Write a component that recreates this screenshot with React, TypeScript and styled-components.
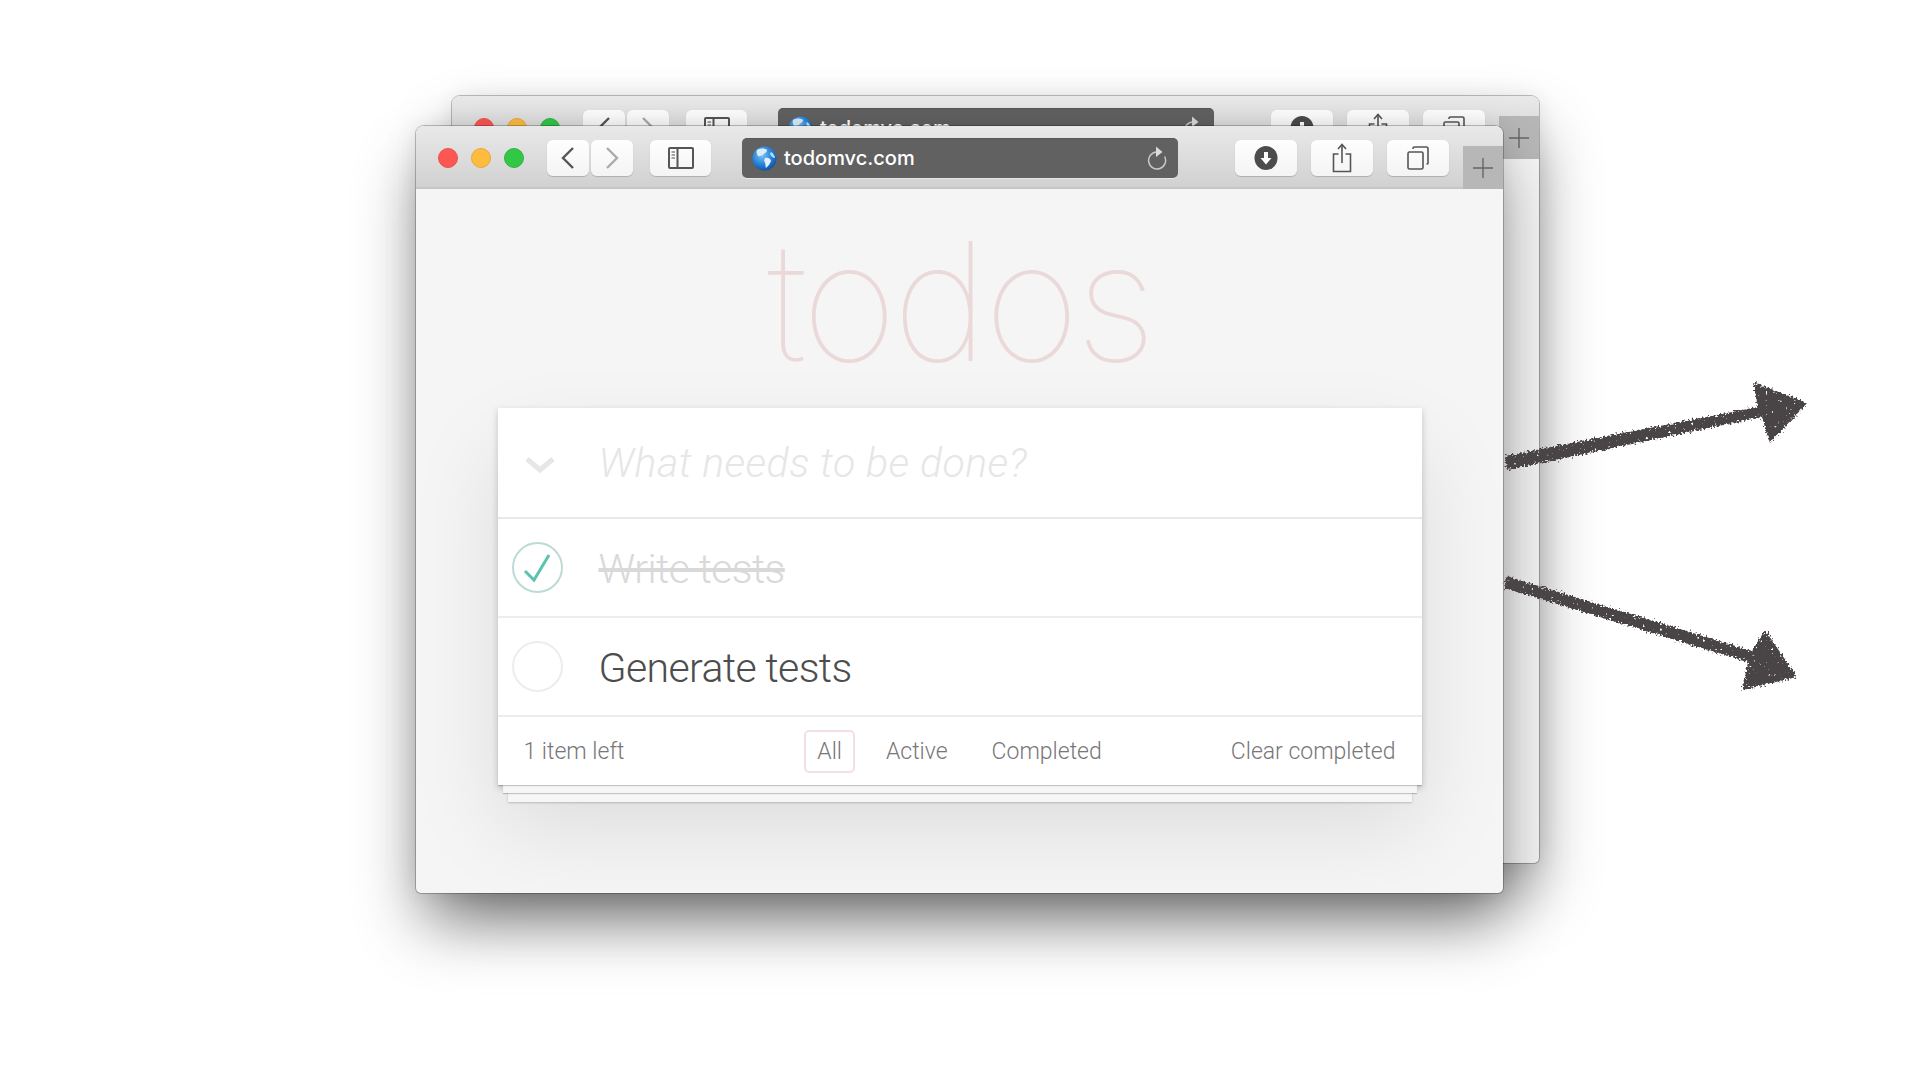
import styled, { createGlobalStyle } from "styled-components";

const GlobalStyle = createGlobalStyle`
    html, body {
        margin: 0;
        background: #fff;
        font-family: Inter, "Liberation Sans", sans-serif;
    }
`

export default function App() {
    return (
        <Stage>
            <GlobalStyle />
            <BrowserWindow $left={452} $top={96}>
                <Toolbar />
            </BrowserWindow>
            <BrowserWindow $left={416} $top={126}>
                <Toolbar />
                <Content>
                    <Title>todos</Title>
                    <TodoApp />
                </Content>
            </BrowserWindow>
            <ChalkArrows />
        </Stage>
    )
}

function Toolbar() {
    return (
        <Bar>
            <Lights>
                <Light $color="#fc5753" $edge="#ec4f4b" />
                <Light $color="#fdbc40" $edge="#e8a838" />
                <Light $color="#33c748" $edge="#2bb53e" />
            </Lights>
            <NavGroup>
                <ToolButton $width={42}>
                    <svg width="14" height="22" viewBox="0 0 14 22" fill="none" stroke="#555" strokeWidth="2.4">
                        <path d="M12 1 L2 11 L12 21" />
                    </svg>
                </ToolButton>
                <ToolButton $width={42}>
                    <svg width="14" height="22" viewBox="0 0 14 22" fill="none" stroke="#aaa" strokeWidth="2.4">
                        <path d="M2 1 L12 11 L2 21" />
                    </svg>
                </ToolButton>
            </NavGroup>
            <ToolButton $width={61}>
                <svg width="26" height="22" viewBox="0 0 26 22" fill="none" stroke="#555" strokeWidth="2">
                    <rect x="1" y="1" width="24" height="20" rx="1" />
                    <path d="M9.5 1 V21" />
                    <path d="M3.5 5 H7 M3.5 8 H7 M3.5 11 H7" stroke="#888" strokeWidth="1.5" />
                </svg>
            </ToolButton>
            <UrlBar>
                <Globe />
                <UrlText>todomvc.com</UrlText>
                <Reload>
                    <svg width="20" height="26" viewBox="0 0 20 26" fill="none">
                        <path d="M10 7 A8.5 8.5 0 1 0 17.6 11.5" stroke="#c8c8c8" strokeWidth="1.5" />
                        <path d="M9 1.5 L15.5 7 L9 12 Z" fill="#dadada" />
                    </svg>
                </Reload>
            </UrlBar>
            <ActionGroup>
                <ToolButton $width={62}>
                    <svg width="24" height="24" viewBox="0 0 24 24">
                        <ellipse cx="12" cy="12" rx="11.5" ry="12" fill="#4c4c4c" />
                        <path d="M10 6 H14 V12 H17.5 L12 18.5 L6.5 12 H10 Z" fill="#fff" />
                    </svg>
                </ToolButton>
                <ToolButton $width={62}>
                    <svg width="20" height="30" viewBox="0 0 20 30" fill="none" stroke="#555" strokeWidth="1.6">
                        <path d="M6.5 11 H1.5 V28.5 H18.5 V11 H13.5" />
                        <path d="M10 20 V2" />
                        <path d="M6 6 L10 1.5 L14 6" />
                    </svg>
                </ToolButton>
                <ToolButton $width={62}>
                    <svg width="22" height="24" viewBox="0 0 22 24" fill="none" stroke="#555" strokeWidth="1.6">
                        <rect x="1" y="6" width="15" height="17" rx="1.5" />
                        <path d="M6 3 V2.5 A1.5 1.5 0 0 1 7.5 1 H19.5 A1.5 1.5 0 0 1 21 2.5 V16 A1.5 1.5 0 0 1 19.5 18" />
                    </svg>
                </ToolButton>
            </ActionGroup>
            <NewTab>
                <svg width="20" height="20" viewBox="0 0 20 20" stroke="#666" strokeWidth="1.4">
                    <path d="M10 0 V20 M0 10 H20" />
                </svg>
            </NewTab>
        </Bar>
    )
}

function Globe() {
    return (
        <svg width="25" height="25" viewBox="0 0 25 25">
            <defs>
                <radialGradient id="ocean" cx="40%" cy="35%" r="70%">
                    <stop offset="0%" stopColor="#7cc4f5" />
                    <stop offset="55%" stopColor="#2a86dc" />
                    <stop offset="100%" stopColor="#0b4f9e" />
                </radialGradient>
            </defs>
            <circle cx="12.5" cy="12.5" r="12" fill="url(#ocean)" />
            <path d="M5 4 C8 2 13 2 15 4 C15 7 12 7 11 9 C9 9 8 11 6 10 C5 8 4 6 5 4 Z" fill="#dcecf8" />
            <path d="M13 12 C16 11 19 13 19 15 C18 18 16 20 14 22 C13 19 14 17 12 15 Z" fill="#e4f1fa" />
            <path d="M19 6 C21 7 23 10 23 12 C21 12 19 10 18 8 Z" fill="#b9dcf4" />
        </svg>
    )
}

function TodoApp() {
    return (
        <Card>
            <InputRow>
                <ToggleAll>
                    <svg width="30" height="18" viewBox="0 0 30 18" fill="none" stroke="#e6e6e6" strokeWidth="5">
                        <path d="M2 3 L15 14 L28 3" />
                    </svg>
                </ToggleAll>
                <Placeholder>What needs to be done?</Placeholder>
            </InputRow>
            <TodoRow>
                <CheckCircle $done>
                    <svg width="28" height="30" viewBox="0 0 28 30" fill="none" stroke="#5dc2af" strokeWidth="3">
                        <path d="M2 18 L11 27 L26 2" />
                    </svg>
                </CheckCircle>
                <TodoText $done>Write tests</TodoText>
            </TodoRow>
            <TodoRow>
                <CheckCircle />
                <TodoText>Generate tests</TodoText>
            </TodoRow>
            <Footer>
                <FooterLeft>1 item left</FooterLeft>
                <Filters>
                    <Filter $active>All</Filter>
                    <Filter>Active</Filter>
                    <Filter>Completed</Filter>
                </Filters>
                <FooterRight>Clear completed</FooterRight>
            </Footer>
        </Card>
    )
}

function ChalkArrows() {
    return (
        <ArrowLayer viewBox="0 0 1920 1080">
            <defs>
                <filter id="chalk" filterUnits="userSpaceOnUse" x="1480" y="360" width="340" height="350">
                    <feTurbulence type="fractalNoise" baseFrequency="0.5" numOctaves="3" seed="4" result="noise" />
                    <feDisplacementMap in="SourceGraphic" in2="noise" scale="8" xChannelSelector="R" yChannelSelector="G" result="rough" />
                    <feTurbulence type="fractalNoise" baseFrequency="0.35" numOctaves="1" seed="9" />
                    <feColorMatrix values="0 0 0 0 0  0 0 0 0 0  0 0 0 0 0  0 0 0 -14 4.4" result="holes" />
                    <feComposite in="rough" in2="holes" operator="out" />
                </filter>
            </defs>
            <g filter="url(#chalk)" fill="#4a4546">
                <path d="M1505 456 L1758 407 L1753 382 L1807 403 L1770 443 L1762 417 L1507 470 Z" />
                <path d="M1506 576 L1752 651 L1765 630 L1797 677 L1742 690 L1748 662 L1504 588 Z" />
            </g>
        </ArrowLayer>
    )
}

const Stage = styled.div`
    position: relative;
    width: 1920px;
    height: 1080px;
    overflow: hidden;
    background: #fff;
`

const BrowserWindow = styled.div<{ $left: number; $top: number }>`
    position: absolute;
    left: ${p => p.$left}px;
    top: ${p => p.$top}px;
    width: 1087px;
    height: 767px;
    display: flex;
    flex-direction: column;
    border-radius: 8px 8px 5px 5px;
    background: #f5f5f5;
    box-shadow: 0 34px 64px -4px rgba(0, 0, 0, .42), 0 0 22px rgba(0, 0, 0, .08), 0 0 0 1px rgba(0, 0, 0, .24);
    overflow: hidden;
`

const Bar = styled.div`
    flex: none;
    height: 63px;
    box-sizing: border-box;
    display: flex;
    align-items: center;
    padding: 2px 0 0 22px;
    background: linear-gradient(#e9e9e9, #d1d1d1);
    border-bottom: 2px solid #c6c6c6;
    position: relative;
`

const Lights = styled.div`
    display: flex;
    gap: 13px;
`

const Light = styled.span<{ $color: string; $edge: string }>`
    width: 20px;
    height: 20px;
    box-sizing: border-box;
    border-radius: 50%;
    background: ${p => p.$color};
    border: 1px solid ${p => p.$edge};
`

const NavGroup = styled.div`
    display: flex;
    gap: 2px;
    margin: 0 17px 0 23px;
`

const ToolButton = styled.div<{ $width: number }>`
    width: ${p => p.$width}px;
    height: 36px;
    display: flex;
    align-items: center;
    justify-content: center;
    border-radius: 6px;
    background: linear-gradient(#fefefe, #f4f4f4);
    box-shadow: 0 1px 1px rgba(0, 0, 0, .18);
`

const UrlBar = styled.div`
    width: 436px;
    height: 40px;
    box-sizing: border-box;
    margin-left: 31px;
    padding: 0 11px 0 10px;
    display: flex;
    align-items: center;
    border-radius: 5px;
    background: #616161;
    border-top: 1px solid #565656;
    box-shadow: 0 1px 0 rgba(255, 255, 255, .4);
`

const UrlText = styled.span`
    margin-left: 7px;
    font-size: 20px;
    font-weight: 500;
    color: #fff;
`

const Reload = styled.span`
    margin-left: auto;
    display: flex;
`

const ActionGroup = styled.div`
    display: flex;
    gap: 14px;
    margin-left: 57px;
`

const NewTab = styled.div`
    position: absolute;
    right: 0;
    bottom: -2px;
    width: 40px;
    height: 43px;
    display: flex;
    align-items: center;
    justify-content: center;
    background: #b7b7b7;
`

const Content = styled.div`
    flex: 1;
    display: flex;
    flex-direction: column;
    align-items: center;
`

const Title = styled.h1`
    margin: 0;
    height: 219px;
    line-height: 224px;
    font-size: 165px;
    font-weight: 100;
    color: #ebd9da;
    letter-spacing: -4.5px;
`

const Card = styled.div`
    width: 924px;
    background: #fff;
    font-family: Roboto, Inter, sans-serif;
    box-shadow: 0 3px 7px rgba(0, 0, 0, .2), 0 42px 84px rgba(0, 0, 0, .1);
`

const InputRow = styled.div`
    height: 111px;
    box-sizing: border-box;
    display: flex;
    align-items: center;
    border-bottom: 2px solid #e8e8e8;
`

const ToggleAll = styled.div`
    width: 85px;
    margin-right: 16px;
    padding-top: 4px;
    display: flex;
    justify-content: center;
`

const Placeholder = styled.span`
    font-size: 41px;
    font-style: italic;
    font-weight: 300;
    letter-spacing: .45px;
    color: #e6e6e6;
`

const TodoRow = styled.div`
    height: 99px;
    box-sizing: border-box;
    display: flex;
    align-items: center;
    padding-left: 14px;
    border-bottom: 2px solid #ededed;
`

const CheckCircle = styled.div<{ $done?: boolean }>`
    flex: none;
    width: 51px;
    height: 51px;
    box-sizing: border-box;
    border-radius: 50%;
    display: flex;
    align-items: center;
    justify-content: center;
    border: 2px solid ${p => p.$done ? "#bddad5" : "#ededed"};
`

const TodoText = styled.span<{ $done?: boolean }>`
    margin-left: 36px;
    padding-top: 2px;
    font-size: 41px;
    font-weight: 300;
    letter-spacing: -.6px;
    color: ${p => p.$done ? "#d9d9d9" : "#4d4d4d"};
    text-decoration: ${p => p.$done ? "line-through" : "none"};
`

const Footer = styled.div`
    height: 68px;
    box-sizing: border-box;
    padding: 0 26px;
    display: grid;
    grid-template-columns: 1fr auto 1fr;
    align-items: center;
    font-size: 23px;
    font-weight: 300;
    color: #777;
    box-shadow: 0 1px 1px rgba(0, 0, 0, .2),
        0 13px 0 -5px #f6f6f6,
        0 14px 1px -5px rgba(0, 0, 0, .2),
        0 27px 0 -10px #f6f6f6,
        0 28px 2px -10px rgba(0, 0, 0, .2);
`

const FooterLeft = styled.span``

const FooterRight = styled.span`
    text-align: right;
`

const Filters = styled.div`
    display: flex;
    gap: 18px;
`

const Filter = styled.span<{ $active?: boolean }>`
    padding: 6px 11px;
    border-radius: 5px;
    border: 2px solid ${p => p.$active ? "rgba(175, 47, 47, .15)" : "transparent"};
`

const ArrowLayer = styled.svg`
    position: absolute;
    inset: 0;
    width: 1920px;
    height: 1080px;
    pointer-events: none;
`
